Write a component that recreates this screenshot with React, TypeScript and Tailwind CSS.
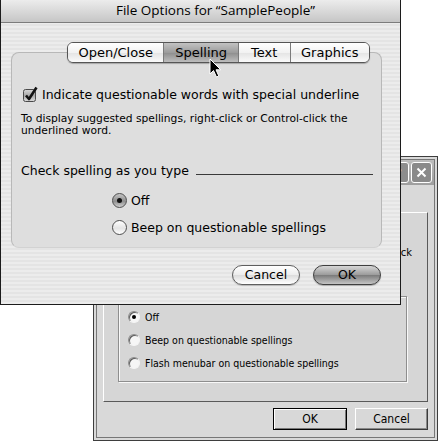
import React from "react";

const mac = "font-['DejaVu_Sans',sans-serif]";
const win = "font-['DejaVu_Sans_Condensed','Liberation_Sans',sans-serif]";

function MacCheckbox() {
  return (
    <svg width="17" height="17" viewBox="0 0 17 17" className="shrink-0">
      <defs>
        <linearGradient id="cb" x1="0" y1="0" x2="0" y2="1">
          <stop offset="0" stopColor="#d8d8d8" />
          <stop offset="0.5" stopColor="#a8a8a8" />
          <stop offset="1" stopColor="#dcdcdc" />
        </linearGradient>
      </defs>
      <rect x="1.5" y="3.5" width="12" height="12" rx="2" fill="url(#cb)" stroke="#4a4a4a" />
      <path d="M4 9.5 L7 13 L14.5 1.5" fill="none" stroke="#111" strokeWidth="2.6" strokeLinejoin="round" />
    </svg>
  );
}

function MacRadio({ on }: { on?: boolean }) {
  return (
    <span
      className={`flex h-[15px] w-[15px] shrink-0 items-center justify-center rounded-full border border-[#4e4e4e] ${
        on
          ? "bg-[linear-gradient(#c4c4c4,#8e8e8e_55%,#cfcfcf)]"
          : "bg-[linear-gradient(#ffffff,#e4e4e4_55%,#ffffff)]"
      }`}
    >
      {on && <span className="h-[5px] w-[5px] rounded-full bg-[#111]" />}
    </span>
  );
}

function WinRadio({ on }: { on?: boolean }) {
  return (
    <span className="flex h-[12px] w-[12px] shrink-0 items-center justify-center rounded-full border border-t-[#8c8c8c] border-l-[#8c8c8c] border-r-[#f4f4f4] border-b-[#f4f4f4] bg-[#f6f6f6] shadow-[inset_1px_1px_0_#5c5c5c]">
      {on && <span className="h-[4px] w-[4px] rounded-full bg-black" />}
    </span>
  );
}

function Segment({ label, w, sel, last }: { label: string; w: string; sel?: boolean; last?: boolean }) {
  return (
    <div
      className={`flex h-full items-center justify-center text-[13px] leading-none text-black ${w} ${
        last ? "" : "border-r border-[#7a7a7a]"
      } ${
        sel
          ? "bg-[linear-gradient(#c2c2c2,#9c9c9c_50%,#8e8e8e_52%,#bdbdbd)]"
          : "bg-[linear-gradient(#ffffff,#f2f2f2_50%,#e4e4e4_52%,#fafafa)]"
      }`}
    >
      {label}
    </div>
  );
}

function WindowsDialog() {
  return (
    <div className={`absolute left-[93px] top-[156px] h-[285px] w-[345px] border border-[#3e3e3e] bg-[#d9d9d9] p-[2px] ${win}`}>
      <div className="flex h-full flex-col border border-[#777]">
        <div className="flex h-[25px] items-center justify-end gap-[2px] bg-[linear-gradient(#bdbdbd,#9e9e9e)] pr-[2px]">
          <div className="flex h-[21px] w-[21px] items-center justify-center rounded-[3px] border border-white bg-[#8d8d8d] text-[13px] font-bold text-white">
            ?
          </div>
          <div className="flex h-[21px] w-[21px] items-center justify-center rounded-[3px] border border-white bg-[#8a8a8a]">
            <svg width="11" height="11" viewBox="0 0 11 11">
              <path d="M1.5 1.5 L9.5 9.5 M9.5 1.5 L1.5 9.5" stroke="white" strokeWidth="2" />
            </svg>
          </div>
        </div>

        <div className="mx-[6px] mt-[27px] flex h-[190px] flex-col border border-t-white border-l-white border-r-[#5a5a5a] border-b-[#5a5a5a] bg-[#d6d6d6]">
          <div className="mt-[33px] overflow-hidden whitespace-nowrap pr-[15px] text-right text-[11px] leading-[13px] text-black">
            To display suggested spellings, right-click or Control-click
          </div>
          <div className="ml-[14px] mr-[20px] mt-[37px] flex h-[86px] flex-col gap-[11px] border border-[#8e8e8e] pl-[9px] pt-[14px] shadow-[1px_1px_0_#f8f8f8,inset_1px_1px_0_#f8f8f8]">
            {[
              ["Off", true],
              ["Beep on questionable spellings", false],
              ["Flash menubar on questionable spellings", false],
            ].map(([t, on]) => (
              <div key={t as string} className="flex h-[12px] items-center gap-[5px] text-[10.5px] leading-none text-black">
                <WinRadio on={on as boolean} />
                <span>{t as string}</span>
              </div>
            ))}
          </div>
        </div>

        <div className="mr-[6px] mt-[6px] flex justify-end gap-[8px]">
          <div className="flex h-[22px] w-[74px] items-center justify-center border border-black bg-[#d8d8d8] text-[12px] text-black shadow-[inset_1px_1px_0_white,inset_-1px_-1px_0_#777]">
            OK
          </div>
          <div className="flex h-[22px] w-[73px] items-center justify-center border border-t-white border-l-white border-r-[#3a3a3a] border-b-[#3a3a3a] bg-[#d8d8d8] text-[12px] text-black shadow-[inset_-1px_-1px_0_#888]">
            Cancel
          </div>
        </div>
      </div>
    </div>
  );
}

function MacDialog() {
  return (
    <div className={`absolute left-0 top-0 flex h-[305px] w-[401px] flex-col border-x border-b border-[#1c1c1c] ${mac}`}>
      <div className="flex h-[23px] shrink-0 items-center justify-center border-b border-[#7c7c7c] bg-[linear-gradient(#ececec,#c6c6c6)] pl-[30px] font-['Open_Sans',sans-serif] text-[13.5px] leading-none text-black">
        File Options for “SamplePeople”
      </div>
      <div className="flex flex-1 flex-col bg-[repeating-linear-gradient(0deg,#ececec_0px,#ececec_2px,#e4e4e4_2px,#e4e4e4_4px)] pt-[19px]">
        <div className="relative z-10 ml-[66px] flex h-[21px] w-[303px] overflow-hidden rounded-[6px] border border-[#555] shadow-[0_1px_1px_rgba(0,0,0,0.25)]">
          <Segment label="Open/Close" w="w-[97px]" />
          <Segment label="Spelling" w="w-[75px]" sel />
          <Segment label="Text" w="w-[52px]" />
          <Segment label="Graphics" w="w-[79px]" last />
        </div>

        <div className="-mt-[11px] ml-[10px] flex h-[196px] w-[371px] flex-col rounded-[8px] border border-[#b8b8b8] border-b-[#d2d2d2] bg-[#dedede] text-black">
          <div className="mt-[33px] ml-[10px] flex h-[17px] items-center gap-[3px] text-[12.5px] leading-[17px]">
            <MacCheckbox />
            <span>Indicate questionable words with special underline</span>
          </div>
          <div className="mt-[10px] ml-[9px] text-[10.7px] leading-[12px]">
            To display suggested spellings, right-click or Control-click the
            <br />
            underlined word.
          </div>
          <div className="mt-[25px] ml-[9px] mr-[8px] flex h-[17px] items-center gap-[7px] text-[12.5px] leading-[17px]">
            <span>Check spelling as you type</span>
            <span className="mt-[7px] h-px flex-1 bg-[#3a3a3a]" />
          </div>
          <div className="ml-[100px] mt-[13px] flex flex-col gap-[10px] text-[12.5px] leading-[17px]">
            <div className="flex h-[17px] items-center gap-[4px]">
              <MacRadio on />
              <span>Off</span>
            </div>
            <div className="flex h-[17px] items-center gap-[4px]">
              <MacRadio />
              <span>Beep on questionable spellings</span>
            </div>
          </div>
        </div>

        <div className="mt-[17px] flex justify-end gap-[13px] pr-[19px]">
          <div className="flex h-[20px] w-[68px] items-center justify-center rounded-full border border-[#5e5e5e] bg-[linear-gradient(#ffffff,#ececec_50%,#dcdcdc_52%,#ffffff)] text-[12.5px] leading-none text-black shadow-[0_1px_1px_rgba(0,0,0,0.2)]">
            Cancel
          </div>
          <div className="flex h-[20px] w-[68px] items-center justify-center rounded-full border border-[#3e3e3e] bg-[linear-gradient(#d6d6d6,#9a9a9a_50%,#7c7c7c_52%,#c4c4c4)] text-[12.5px] leading-none text-black shadow-[0_1px_1px_rgba(0,0,0,0.25)]">
            OK
          </div>
        </div>
      </div>
    </div>
  );
}

function Cursor() {
  return (
    <svg className="absolute left-[209px] top-[58px] z-20" width="14" height="21" viewBox="0 0 14 21">
      <path d="M1 1 L1 16 L4.5 12.5 L7.5 19 L9.8 18 L7 11.8 L11.8 11.8 Z" fill="black" stroke="white" strokeWidth="1" strokeLinejoin="round" />
    </svg>
  );
}

export default function App() {
  return (
    <div className="relative h-[441px] w-[438px] overflow-hidden bg-white">
      <WindowsDialog />
      <MacDialog />
      <Cursor />
    </div>
  );
}
